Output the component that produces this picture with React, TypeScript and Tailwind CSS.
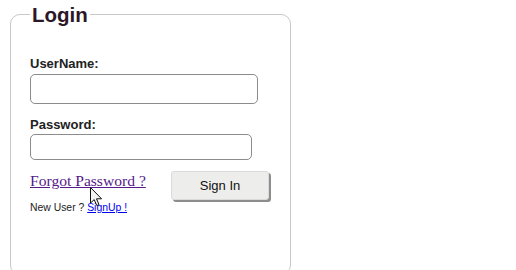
import React from 'react';

const Cursor: React.FC = () => (
  <svg
    className="absolute left-[90px] top-[187px] pointer-events-none"
    width="13"
    height="20"
    viewBox="0 0 13 20"
  >
    <path
      d="M0.5 0.5 L0.5 16 L4.2 12.6 L6.8 18.6 L9 17.6 L6.5 11.8 L11.6 11.8 Z"
      fill="#f4f4f4"
      stroke="#111"
      strokeWidth="1"
      strokeLinejoin="miter"
    />
  </svg>
);

const App: React.FC = () => {
  return (
    <div className="relative w-[516px] h-[270px] overflow-hidden bg-white pl-[10px] pt-[3px] font-['Liberation_Sans',Arial,sans-serif]">
      <fieldset className="w-[281px] h-[272px] border border-[#c8c8c8] rounded-[10px] pl-[19px]">
        <legend className="px-[2px] text-[20.5px] leading-[23px] font-bold text-[#2b1727]">Login</legend>

        <label className="block mt-[30px] text-[13px] leading-[15px] font-bold text-[#222]">UserName:</label>
        <input
          type="text"
          className="block mt-[3px] w-[228px] h-[30px] border border-[#8c8c8c] rounded-[5px] bg-white px-1 outline-none"
        />

        <label className="block mt-[13px] text-[13px] leading-[15px] font-bold text-[#222]">Password:</label>
        <input
          type="password"
          className="block mt-[2px] w-[222px] h-[26px] border border-[#8c8c8c] rounded-[5px] bg-white px-1 outline-none"
        />

        <div className="flex items-start mt-[11px]">
          <a
            href="#forgot"
            className="w-[116px] whitespace-nowrap font-['Liberation_Serif','Times_New_Roman',serif] text-[15.6px] leading-[18px] text-[#551a8b] underline mt-[1px]"
          >
            Forgot Password ?
          </a>
          <button
            type="button"
            className="ml-[25px] w-[98px] h-[29px] bg-[#ededeb] border border-[#dadada] rounded-[3px] shadow-[2px_2px_0_#8d8d8d] text-[13px] text-[#111]"
          >
            Sign In
          </button>
        </div>

        <p className="mt-[2px] text-[10.4px] leading-[12px] text-[#222]">
          New User ?{' '}
          <a href="#signup" className="text-[#0000ee] underline">
            SignUp !
          </a>
        </p>
      </fieldset>
      <Cursor />
    </div>
  );
};

export default App;
